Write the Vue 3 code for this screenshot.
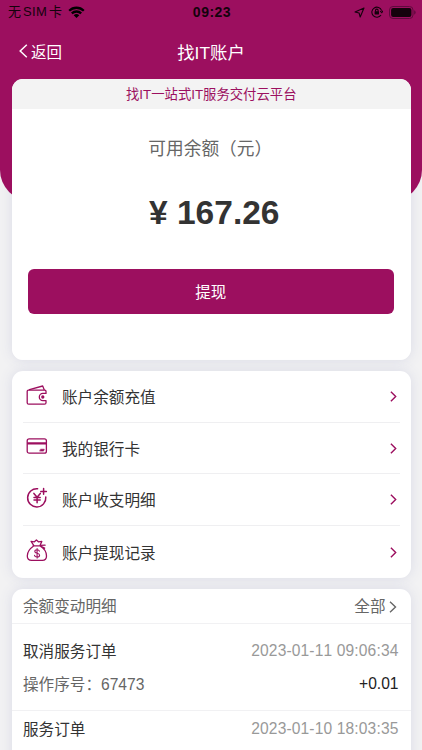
<script setup>
const menu = [
  { icon: 'wallet', label: '账户余额充值' },
  { icon: 'card', label: '我的银行卡' },
  { icon: 'yen', label: '账户收支明细' },
  { icon: 'bag', label: '账户提现记录' },
]
const records = [
  { title: '取消服务订单', time: '2023-01-11 09:06:34', serial: '67473', amount: '+0.01' },
  { title: '服务订单', time: '2023-01-10 18:03:35' },
]
</script>

<template>
  <div class="screen">
    <div class="glow"></div>
    <div class="backdrop"></div>
    <header class="status">
      <div class="carrier">
        <span>无<i class="sim">SIM</i>卡</span>
        <svg class="wifi" width="17" height="12" viewBox="0 0 17 12">
          <path d="M.4 3.9a11.5 11.5 0 0 1 16.2 0l-1.6 1.7a9.2 9.2 0 0 0-13 0zM3 6.6a7.8 7.8 0 0 1 11 0l-1.6 1.7a5.5 5.5 0 0 0-7.8 0zM5.7 9.3a4 4 0 0 1 5.6 0L8.5 12z" />
        </svg>
      </div>
      <div class="clock">09:23</div>
      <div class="indicators">
        <svg width="11" height="11" viewBox="0 0 11 11" fill="none" stroke="currentColor" stroke-width="1.1" stroke-linejoin="round">
          <path d="M10 1 6.2 10 5.1 6 1 5z" />
        </svg>
        <svg width="12" height="12" viewBox="0 0 12 12" fill="none" stroke="currentColor" stroke-width="1.1">
          <path d="M10.6 4.6A5 5 0 1 0 10 9M9.2 5.2l1.6 1.5 1.1-1.9" />
          <path d="M4.5 5.7V4.4a1.3 1.3 0 0 1 2.6 0v1.3" />
          <rect x="3.6" y="5.2" width="4.4" height="3.3" rx=".4" fill="currentColor" stroke="none" />
        </svg>
        <svg width="27" height="13" viewBox="0 0 27 13">
          <rect x=".5" y=".5" width="23.5" height="12" rx="3.5" fill="none" stroke="#5f0a3d" />
          <rect x="2.1" y="2.1" width="20.3" height="8.8" rx="2" fill="currentColor" />
          <path d="M25.2 4.3a2.4 2.4 0 0 1 0 4.4z" fill="#5f0a3d" />
        </svg>
      </div>
    </header>

    <nav class="navbar">
      <div class="back">
        <svg width="9" height="14" viewBox="0 0 9 14" fill="none" stroke="currentColor" stroke-width="1.5">
          <path d="M7.8.8 1.2 7l6.6 6.2" />
        </svg>
        <span>返回</span>
      </div>
      <h1>找IT账户</h1>
      <div></div>
    </nav>

    <main>
      <section class="panel balance">
        <div class="slogan">找IT一站式IT服务交付云平台</div>
        <div class="caption">可用余额（元）</div>
        <div class="amount">¥ 167.26</div>
        <button class="withdraw">提现</button>
      </section>

      <section class="panel menu">
        <div v-for="item in menu" :key="item.icon" class="row">
          <svg class="icon" width="22" height="24" viewBox="0 0 22 24" fill="none" stroke="currentColor" stroke-width="1.3" stroke-linejoin="round" stroke-linecap="round">
            <template v-if="item.icon === 'wallet'">
              <path d="M20 10.4V8.3a1.2 1.2 0 0 0-1.2-1.2H2.4A1.2 1.2 0 0 0 1.2 8.3v11.4a1.5 1.5 0 0 0 1.5 1.5h15.8a1.5 1.5 0 0 0 1.5-1.5v-2.1h-3.1a3.6 3.6 0 0 1 0-7.2z" />
              <path d="M3.5 6.6 16.7 3l1.5 3.7" />
              <circle cx="16.8" cy="14" r="1" fill="currentColor" />
            </template>
            <template v-else-if="item.icon === 'card'">
              <rect x="1.2" y="4.8" width="19.2" height="14.4" rx="2" />
              <path d="M1.2 9.3h19.2" stroke-width="2.2" stroke-linecap="butt" />
              <path d="M14.8 15.2h3.5l-.8 1.9H14z" fill="currentColor" stroke-width=".6" />
            </template>
            <template v-else-if="item.icon === 'yen'">
              <path d="M11.6 2.8A9.1 9.1 0 1 0 19.8 11M17.6 2.6v5.6M14.8 5.4h5.6" stroke-width="1.5" />
              <path d="M7.9 7.4l3.2 3.9 3.2-3.9M11.1 11.6v5.2M8 11.6h6.2M8 14.1h6.2" stroke-width="1.5" />
            </template>
            <template v-else>
              <path d="M7.7 7.3 5.1 3.4l3.3.4 2-1.8 2 1.8 3.4-.4-1.7 3.9M7 7.8h8M7.3 8.3C3 11.3 1.3 14.9 1.3 18c0 3 1.6 4.4 4.4 4.4h10.6c2.8 0 4.2-1.5 4.2-4.4 0-3.1-2.1-7.3-6-9.7M14.5 7.3l4.6-.1M15 8.4l3.6 1.8" />
              <path d="M13.4 13.1c-.3-1-1.1-1.4-2.3-1.4-1.4 0-2.3.6-2.3 1.7 0 2.7 4.8 1.1 4.8 3.8 0 1.1-1 1.8-2.5 1.8-1.4 0-2.4-.6-2.6-1.7M11.1 10.6v9.5" stroke-width="1.1" />
            </template>
          </svg>
          <span class="label">{{ item.label }}</span>
          <svg class="go" width="7" height="11" viewBox="0 0 7 11" fill="none" stroke="currentColor" stroke-width="1.4">
            <path d="M.9.7 5.7 5.5.9 10.3" />
          </svg>
        </div>
      </section>

      <section class="panel history">
        <div class="head">
          <span>余额变动明细</span>
          <span class="all"><span>全部</span>
            <svg width="8" height="12" viewBox="0 0 8 12" fill="none" stroke="currentColor" stroke-width="1.4">
              <path d="M1 .8 6.5 6 1 11.2" />
            </svg>
          </span>
        </div>
        <article v-for="r in records" :key="r.time" class="record">
          <div class="line"><span class="title">{{ r.title }}</span><span class="time">{{ r.time }}</span></div>
          <div v-if="r.serial" class="line detail"><span class="serial">操作序号：{{ r.serial }}</span><span class="delta">{{ r.amount }}</span></div>
        </article>
      </section>
    </main>
  </div>
</template>

<style>
body {
  margin: 0;
  overflow: hidden;
}
</style>

<style scoped>
.screen {
  position: relative;
  width: 422px;
  height: 750px;
  overflow: hidden;
  background: #f2f2f3;
  color: #333;
  font-family: "Liberation Sans", "Noto Sans CJK SC", sans-serif;
  font-kerning: none;
}
/* The balance card's shadow sits beneath the coloured backdrop */
.glow {
  position: absolute;
  top: 79px;
  right: 11.5px;
  left: 12px;
  height: 281px;
  border-radius: 11px;
  box-shadow: 0 0 13px #d9dae6;
}
.backdrop {
  position: absolute;
  inset: 0 0 auto;
  height: 201px;
  border-radius: 0 0 31px 31px;
  background: #9c0f5f;
}
.status {
  position: relative;
  display: grid;
  grid-template-columns: 1fr auto 1fr;
  align-items: center;
  height: 24px;
  padding: 0 6px 0 8px;
  color: #14020c;
  font-size: 13px;
}
.carrier,
.indicators {
  display: flex;
  align-items: center;
}
.carrier {
  gap: 6px;
  line-height: 18px;
  padding-bottom: 1px;
}
.sim {
  margin: 0 2px;
  font-style: normal;
  letter-spacing: 0.3px;
}
.clock {
  font-weight: 700;
  font-size: 14px;
  letter-spacing: 0.5px;
}
.indicators {
  justify-content: flex-end;
  gap: 6px;
}
.navbar {
  position: relative;
  display: grid;
  grid-template-columns: 1fr auto 1fr;
  align-items: center;
  height: 54px;
  padding: 0 19px 1px;
  color: #fff;
}
.back {
  display: flex;
  align-items: center;
  gap: 3px;
  font-size: 15.5px;
}
.back span {
  padding-bottom: 1px;
}
h1 {
  margin: 0;
  font-size: 17.4px;
  font-weight: 400;
}
main {
  position: relative;
  display: flex;
  flex-direction: column;
  gap: 11px;
  padding: 0 11.5px 0 12px;
}
.panel {
  overflow: hidden;
  border-radius: 11px;
  background: #fff;
  box-shadow: 0 0 13px #d9dae6;
}
.balance {
  display: flex;
  flex-direction: column;
  height: 281px;
  text-align: center;
  box-shadow: none;
}
.slogan {
  height: 30px;
  line-height: 31px;
  background: #f3f3f3;
  color: #9c0f5f;
  font-size: 13.35px;
}
.caption {
  margin-top: 26px;
  padding-right: 2px;
  line-height: 28px;
  color: #666;
  font-size: 17.7px;
}
.amount {
  margin-top: 30px;
  padding-left: 6px;
  line-height: 40px;
  font-size: 33.5px;
  font-weight: 700;
}
.withdraw {
  height: 45px;
  margin: 35.5px 17px 0 16px;
  padding: 0 0 1px;
  border: 0;
  border-radius: 6px;
  background: #9c0f5f;
  color: #fff;
  font: inherit;
  font-size: 15.5px;
}
.menu {
  height: 206.5px;
}
.row {
  display: flex;
  align-items: center;
  height: 51.6px;
  box-sizing: border-box;
  margin: 0 11px;
  padding: 0 2px 0 3px;
  border-bottom: 1px solid #efeff1;
}
.row:last-child {
  border-bottom: 0;
}
.icon,
.go {
  flex: none;
  color: #9c0f5f;
}
.icon {
  margin-bottom: 3px;
}
.go {
  margin-top: 1px;
  margin-right: 1px;
}
.label {
  flex: 1;
  margin-left: 14px;
  font-size: 15.6px;
}
.history {
  height: 220px;
}
.head {
  display: flex;
  align-items: center;
  justify-content: space-between;
  height: 34px;
  padding: 0 14px 0 11px;
  border-bottom: 1px solid #f1f1f3;
  color: #666;
  font-size: 15.6px;
}
.head > span:first-child,
.all > span {
  padding-bottom: 1px;
}
.all {
  display: flex;
  align-items: center;
  gap: 3px;
}
.all svg {
  margin-top: 2px;
}
.record {
  padding: 6px 12px 0 11px;
  box-sizing: border-box;
}
.record:nth-child(2) {
  height: 87px;
  padding-top: 15px;
  border-bottom: 1px solid #f1f1f3;
}
.line {
  display: flex;
  align-items: center;
  justify-content: space-between;
  height: 24px;
  font-size: 15.6px;
}
.title,
.serial {
  padding-bottom: 2px;
}
.detail {
  margin-top: 9px;
}
.time {
  color: #999;
  letter-spacing: 0.13px;
}
.serial {
  color: #666;
}
.delta {
  color: #222;
}
</style>
